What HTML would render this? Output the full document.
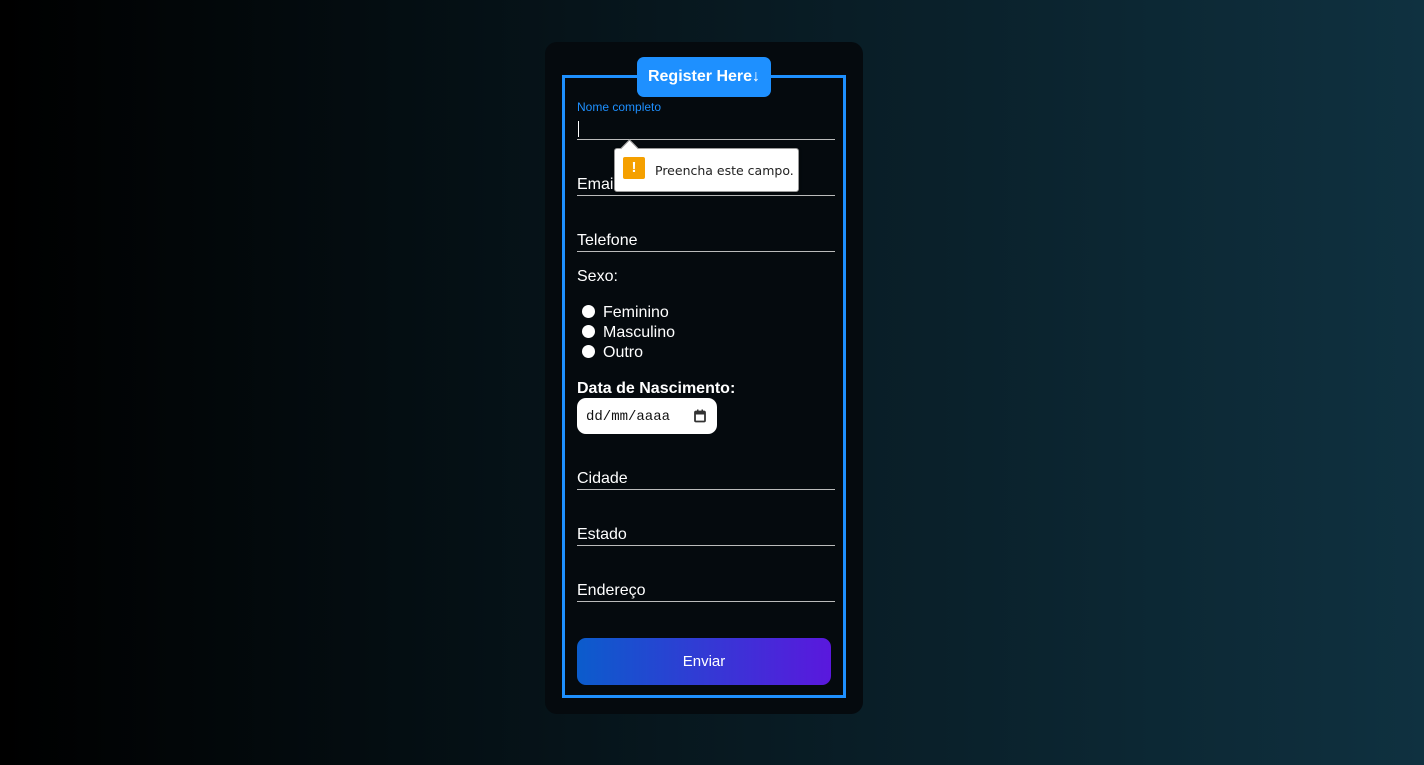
<!DOCTYPE html>
<html><head><style>
body{margin:0;width:1424px;height:765px;background:linear-gradient(to right,#000 0%,#0f3140 100%);font-family:"Liberation Sans",Arimo,Arial,Helvetica,sans-serif;position:relative;overflow:hidden}
.card{position:absolute;left:545px;top:42px;width:318px;height:672px;background:#050a0e;border-radius:12px}
.fs{position:absolute;left:562px;top:75px;width:284px;height:623px;border:3px solid #1e90ff;box-sizing:border-box}
.leg{position:absolute;left:637px;top:57px;width:134px;height:40px;background:#1e90ff;border-radius:7px;color:#fff;font-weight:bold;font-size:16px;line-height:40px;text-align:center}
.t{position:absolute;color:#fff;font-size:16px;white-space:nowrap}
.line{position:absolute;left:577px;width:258px;height:1px;background:#bbb}
.r{position:absolute;left:582px;width:13px;height:13px;border-radius:50%;background:#fff}
</style></head><body>
<div class="card"></div>
<div class="fs"></div>
<div class="leg">Register Here↓</div>
<div class="t" style="left:577px;top:100px;font-size:12px;color:#1e90ff">Nome completo</div>
<div style="position:absolute;left:578px;top:121px;width:1px;height:16px;background:#fff"></div>
<div class="line" style="top:139px"></div>
<div class="t" style="left:577px;top:176px">Email</div>
<div class="line" style="top:195px"></div>
<div class="t" style="left:577px;top:232px">Telefone</div>
<div class="line" style="top:251px"></div>
<div class="t" style="left:577px;top:268px">Sexo:</div>
<div class="r" style="top:305px"></div><div class="t" style="left:603px;top:304px">Feminino</div>
<div class="r" style="top:325px"></div><div class="t" style="left:603px;top:324px">Masculino</div>
<div class="r" style="top:345px"></div><div class="t" style="left:603px;top:344px">Outro</div>
<div class="t" style="left:577px;top:380px;font-weight:bold">Data de Nascimento:</div>
<div style="position:absolute;left:577px;top:398px;width:140px;height:36px;background:#fff;border-radius:9px"></div>
<div class="t" style="left:586px;top:409px;color:#111;font-family:'Liberation Mono',monospace;font-size:14px">dd/mm/aaaa</div>
<svg style="position:absolute;left:693px;top:409px" width="14" height="14" viewBox="0 0 14 14"><rect x="2" y="2.5" width="10" height="10" rx="1" fill="none" stroke="#333" stroke-width="1.8"/><rect x="2" y="2.5" width="10" height="3" fill="#333"/><rect x="4" y="0.5" width="1.5" height="2.5" fill="#333"/><rect x="8.5" y="0.5" width="1.5" height="2.5" fill="#333"/></svg>
<div class="t" style="left:577px;top:470px">Cidade</div>
<div class="line" style="top:489px"></div>
<div class="t" style="left:577px;top:526px">Estado</div>
<div class="line" style="top:545px"></div>
<div class="t" style="left:577px;top:582px">Endereço</div>
<div class="line" style="top:601px"></div>
<div style="position:absolute;left:577px;top:638px;width:254px;height:47px;border-radius:9px;background:linear-gradient(to right,#0b5ccc,#5a18dd);color:#fff;font-size:15px;line-height:47px;text-align:center">Enviar</div>
<div style="position:absolute;left:614px;top:148px;width:183px;height:42px;background:#fff;border:1px solid #999;border-radius:3px;box-shadow:0 1px 3px rgba(0,0,0,.4)"></div>
<div style="position:absolute;left:623px;top:142px;width:12px;height:12px;background:#fff;transform:rotate(45deg);border-left:1px solid #999;border-top:1px solid #999"></div>
<div style="position:absolute;left:623px;top:157px;width:22px;height:22px;background:#f5a000;border-radius:2px;color:#fff;font-weight:bold;font-size:15px;line-height:22px;text-align:center">!</div>
<div class="t" style="left:655px;top:163px;color:#222;font-size:12.5px;font-family:'DejaVu Sans',sans-serif">Preencha este campo.</div>
</body></html>
